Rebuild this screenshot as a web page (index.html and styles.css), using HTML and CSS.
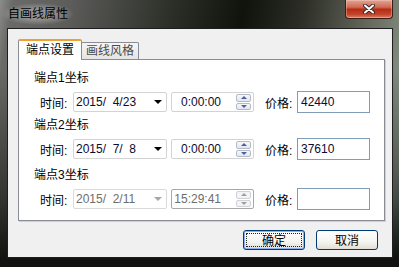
FILE: index.html
```html
<!DOCTYPE html>
<html lang="zh-CN">
<head>
  <meta charset="UTF-8" />
  <title>自画线属性</title>
  <link rel="stylesheet" href="styles.css">
</head>
<body>
  <div class="window">
    <div class="titlebar">
      <span class="title">自画线属性</span>
      <div class="close">
        <svg width="12" height="10" viewBox="0 0 12 10">
          <path d="M2 1.5 L10 8.5 M10 1.5 L2 8.5" stroke="#3a2a2a" stroke-width="4" stroke-linecap="round"/>
          <path d="M2 1.5 L10 8.5 M10 1.5 L2 8.5" stroke="#fff" stroke-width="2" stroke-linecap="round"/>
        </svg>
      </div>
    </div>

    <div class="client">
      <div class="tabs">
        <div class="tab active">端点设置</div>
        <div class="tab">画线风格</div>
      </div>

      <div class="panel">
        <div class="group">
          <div class="group-label">端点1坐标</div>
          <div class="row">
            <span class="lbl">时间:</span>
            <div class="date"><span class="val">2015/  4/23</span><span class="arrow"></span></div>
            <div class="time"><span class="time-text">0:00:00</span><div class="spin"><span class="up"></span><span class="down"></span></div></div>
            <span class="lbl price-lbl">价格:</span>
            <div class="price">42440</div>
          </div>
        </div>

        <div class="group">
          <div class="group-label">端点2坐标</div>
          <div class="row">
            <span class="lbl">时间:</span>
            <div class="date"><span class="val">2015/  7/  8</span><span class="arrow"></span></div>
            <div class="time"><span class="time-text">0:00:00</span><div class="spin"><span class="up"></span><span class="down"></span></div></div>
            <span class="lbl price-lbl">价格:</span>
            <div class="price">37610</div>
          </div>
        </div>

        <div class="group last">
          <div class="group-label">端点3坐标</div>
          <div class="row disabled">
            <span class="lbl">时间:</span>
            <div class="date"><span class="val">2015/  2/11</span><span class="arrow"></span></div>
            <div class="time"><span class="time-text">15:29:41</span><div class="spin"><span class="up"></span><span class="down"></span></div></div>
            <span class="lbl price-lbl">价格:</span>
            <div class="price"></div>
          </div>
        </div>
      </div>

      <div class="buttons">
        <button class="btn default"><span>确定</span></button>
        <button class="btn"><span>取消</span></button>
      </div>
    </div>
  </div>
</body>
</html>
```

FILE: styles.css
```css
* { box-sizing: border-box; }

body {
  margin: 0;
  background: #151515;
  font-family: "Liberation Sans", "Noto Sans CJK SC", sans-serif;
  font-size: 12px;
  color: #000;
}

/* --- window frame --- */
.window {
  width: 399px;
  height: 267px;
  display: flex;
  flex-direction: column;
  background:
    linear-gradient(to bottom, rgba(0,0,0,0) 70px, rgba(10,10,8,0.55) 200px, #121210 258px),
    linear-gradient(100deg, #8c8c8c 0, #6a6a68 3%, #5c5c5a 16%, #2a2d25 40%, #0f130c 55%, #2b2d26 68%, #6b6e62 85%, #8c9a8e 96%, #5e8a74 100%);
}

.titlebar { height: 28px; display: flex; align-items: flex-start; }
.title {
  margin: 3px 0 0 2px;
  padding: 3px 6px;
  line-height: 16px;
  color: #000;
  background: radial-gradient(ellipse at center, rgba(190,190,188,0.55) 30%, rgba(190,190,188,0) 72%);
}
.close {
  margin-left: auto;
  margin-right: 6px;
  width: 48px;
  height: 19px;
  border: 1px solid #3a1d17;
  border-top: none;
  border-radius: 0 0 4px 4px;
  background: linear-gradient(#e3a594, #cf6a55 40%, #b52c14 52%, #c2452a 80%, #d9826a);
  box-shadow: inset 0 0 0 1px rgba(255,220,210,0.35);
  display: flex;
  align-items: center;
  justify-content: center;
}

/* --- client area --- */
.client {
  flex: 1;
  margin: 0 6px 9px 7px;
  border: 1px solid #1e1e1e;
  background: #f0f0f0;
  padding: 10px 7px 0 10px;
  display: flex;
  flex-direction: column;
}

.tabs { display: flex; align-items: flex-end; height: 20px; }
.tab {
  height: 17px;
  line-height: 16px;
  padding: 0 4px;
  margin-left: -1px;
  border: 1px solid #898c95;
  border-bottom: none;
  border-radius: 2px 2px 0 0;
  background: linear-gradient(#f6f6f6, #e4e4e4);
  color: #4a4a4a;
}
.tab.active {
  height: 21px;
  line-height: 18px;
  margin-left: 0;
  margin-bottom: -1px;
  padding: 0 7px;
  border-top: 2px solid #f0a030;
  background: #fff;
  color: #000;
  position: relative;
  z-index: 1;
}

.panel {
  height: 162px;
  border: 1px solid #898c95;
  background: #fff;
  box-shadow: 1px 1px 0 #cfcfcf;
  padding: 10px 0 0 15px;
  display: flex;
  flex-direction: column;
  gap: 4px;
}
.group.last { margin-top: 3px; }
.group-label { line-height: 16px; }

.row {
  display: flex;
  align-items: center;
  height: 22px;
  margin-top: 5px;
  padding-left: 6px;
  color: #0c0c30;
}
.lbl { width: 33px; color: #000; }
.price-lbl { width: 32px; margin-left: 11px; }

.date, .time {
  height: 20px;
  border: 1px solid #d3d3d3;
  border-radius: 2px;
  display: flex;
  align-items: center;
  padding-left: 2px;
  background: #fff;
}
.date { width: 94px; justify-content: space-between; padding-right: 4px; }
.val { white-space: pre; }
.arrow {
  width: 0; height: 0;
  border-left: 4px solid transparent;
  border-right: 4px solid transparent;
  border-top: 4px solid #000;
}
.time { width: 83px; margin-left: 4px; }
.time-text { width: 47px; text-align: right; }
.spin {
  margin-left: auto;
  margin-right: 2px;
  width: 15px;
  height: 16px;
  display: flex;
  flex-direction: column;
  gap: 1px;
}
.spin span {
  flex: 1;
  border: 1px solid #b4bac6;
  border-radius: 2px;
  background: linear-gradient(#f7f8fa, #e2e6ee);
  display: flex;
  align-items: center;
  justify-content: center;
}
.spin span::after {
  content: "";
  border-left: 3px solid transparent;
  border-right: 3px solid transparent;
}
.spin .up::after { border-bottom: 3px solid #4b5fa6; }
.spin .down::after { border-top: 3px solid #4b5fa6; }

.price {
  width: 73px;
  height: 22px;
  border: 1px solid #7f9db9;
  background: #fff;
  padding-left: 3px;
  line-height: 20px;
}

.row.disabled .date, .row.disabled .time { color: #6d6d6d; }
.row.disabled .date { border-color: #dadada; }
.row.disabled .time { border-color: #a8a8a8; }
.row.disabled .arrow { border-top-color: #a8a8a8; }
.row.disabled .spin span { border-color: #cfd2d6; background: #f4f4f4; }
.row.disabled .spin .up::after { border-bottom-color: #a0a0a0; }
.row.disabled .spin .down::after { border-top-color: #a0a0a0; }

/* --- dialog buttons --- */
.buttons {
  display: flex;
  justify-content: flex-end;
  gap: 11px;
  margin-top: 9px;
  padding-right: 7px;
}
.btn {
  width: 62px;
  height: 20px;
  padding: 2px;
  border: 1px solid #003c74;
  border-radius: 3px;
  background: linear-gradient(#ffffff, #f4f4f0 60%, #e2ded4);
  font-family: "Liberation Sans", "Noto Sans CJK SC", sans-serif;
  font-size: 12px;
  color: #000;
  display: flex;
}
.btn span {
  flex: 1;
  line-height: 14px;
  border: 1px dotted transparent;
}
.btn.default { box-shadow: inset 0 0 0 1px #8fb0e8; }
.btn.default span { border-color: #222; }
```
